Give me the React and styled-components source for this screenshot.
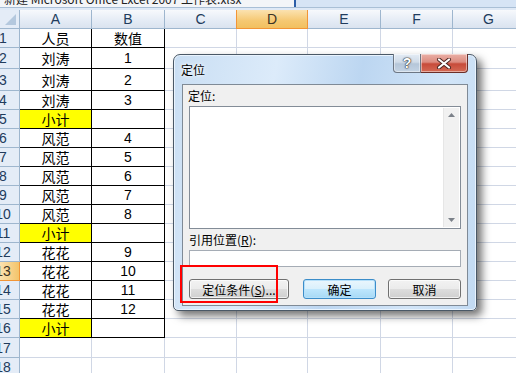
import React from "react";
import styled, { createGlobalStyle } from "styled-components";

const GlobalStyle = createGlobalStyle`
  html, body {
    margin: 0;
    padding: 0;
    background: #ffffff;
    overflow: hidden;
  }
`;

const COLS = [
  { name: "A", width: 72 },
  { name: "B", width: 73 },
  { name: "C", width: 72 },
  { name: "D", width: 71, active: true },
  { name: "E", width: 73 },
  { name: "F", width: 72 },
  { name: "G", width: 72 },
];

const ROWS = [
  { h: 19, a: "人员", b: "数值" },
  { h: 21, a: "刘涛", b: "1" },
  { h: 22, a: "刘涛", b: "2" },
  { h: 19, a: "刘涛", b: "3" },
  { h: 19, a: "小计", b: "", sub: true },
  { h: 19, a: "风范", b: "4" },
  { h: 19, a: "风范", b: "5" },
  { h: 19, a: "风范", b: "6" },
  { h: 19, a: "风范", b: "7" },
  { h: 19, a: "风范", b: "8" },
  { h: 19, a: "小计", b: "", sub: true },
  { h: 19, a: "花花", b: "9" },
  { h: 19, a: "花花", b: "10" },
  { h: 19, a: "花花", b: "11" },
  { h: 19, a: "花花", b: "12" },
  { h: 19, a: "小计", b: "", sub: true },
  { h: 20 },
  { h: 19 },
];

const Page = styled.div`
  position: relative;
  width: 516px;
  height: 373px;
  overflow: hidden;
  background: #ffffff;
`;

const TopStrip = styled.div`
  display: flex;
  height: 7px;
  overflow: hidden;
  background: #d6e4f5;
`;

const FileName = styled.div`
  width: 290px;
  border-right: 2px solid #2c5ea8;
  background: #f3f5f8;
  font-family: "Noto Sans CJK SC", "Liberation Sans", sans-serif;
  font-size: 12px;
  line-height: 12px;
  margin-top: -7px;
  padding-left: 4px;
  color: #222;
  white-space: nowrap;
  overflow: hidden;
`;

const Band = styled.div`
  height: 3px;
  background: #dfe9f6;
  border-top: 1px solid #a9bfd6;
  box-sizing: border-box;
`;

const Sheet = styled.div`
  display: grid;
  grid-template-columns: 20px ${COLS.map((c) => c.width + "px").join(" ")};
  width: 560px;
`;

const Corner = styled.div`
  position: relative;
  height: 19px;
  background: #e4ecf7;
  border-right: 1px solid #9eb6ce;
  border-bottom: 1px solid #9eb6ce;
  box-sizing: border-box;
  &::after {
    content: "";
    position: absolute;
    right: 3px;
    bottom: 3px;
    border-left: 11px solid transparent;
    border-bottom: 11px solid #b4c8de;
  }
`;

const ColHead = styled.div`
  height: 19px;
  box-sizing: border-box;
  display: flex;
  align-items: center;
  justify-content: center;
  font-family: "Liberation Sans", Arial, sans-serif;
  font-size: 14px;
  color: ${({ $active }) => ($active ? "#3b3325" : "#213b5c")};
  background: ${({ $active }) =>
    $active
      ? "linear-gradient(#fbe2b0, #f5c872 60%, #f2c060)"
      : "linear-gradient(#f7f9fc, #e4ebf5 60%, #dae3ef)"};
  border-right: 1px solid ${({ $active }) => ($active ? "#f29536" : "#9eb6ce")};
  border-bottom: 1px solid ${({ $active }) => ($active ? "#f29536" : "#9eb6ce")};
  border-left: ${({ $active }) => ($active ? "1px solid #f29536" : "0")};
  margin-left: ${({ $active }) => ($active ? "-1px" : "0")};
`;

const RowHead = styled.div`
  height: ${({ $h }) => $h}px;
  box-sizing: border-box;
  overflow: hidden;
  display: flex;
  align-items: center;
  font-family: "Liberation Sans", Arial, sans-serif;
  font-size: 14px;
  color: ${({ $active }) => ($active ? "#3b3325" : "#213b5c")};
  background: ${({ $active }) =>
    $active ? "linear-gradient(90deg, #fbe2b0, #f3c46a)" : "#e4ecf7"};
  border-right: 1px solid ${({ $active }) => ($active ? "#f29536" : "#9eb6ce")};
  border-bottom: 1px solid ${({ $active }) => ($active ? "#f29536" : "#9eb6ce")};
  span {
    flex: none;
    width: 26px;
    margin-left: -10px;
    text-align: center;
  }
`;

const Cell = styled.div`
  height: ${({ $h }) => $h}px;
  box-sizing: border-box;
  display: flex;
  align-items: center;
  justify-content: center;
  white-space: nowrap;
  font-family: ${({ $num }) =>
    $num
      ? '"Liberation Sans", Arial, sans-serif'
      : '"Noto Sans CJK SC", "Liberation Sans", sans-serif'};
  font-size: 14px;
  line-height: 14px;
  color: #000;
  background: ${({ $yellow }) => ($yellow ? "#ffff00" : "#ffffff")};
  border-right: 1px solid ${({ $table }) => ($table ? "#000" : "#d0d7e5")};
  border-bottom: 1px solid ${({ $table }) => ($table ? "#000" : "#d0d7e5")};
`;

/* dialog */

const Dialog = styled.div`
  position: absolute;
  left: 173px;
  top: 54px;
  width: 304px;
  height: 257px;
  box-sizing: border-box;
  padding: 29px 8px 4px 8px;
  border: 1px solid #4a5866;
  border-radius: 7px 7px 5px 5px;
  background: linear-gradient(
    100deg,
    #c9def3 0%,
    #dcebfa 30%,
    #bcd6f1 55%,
    #d2e5f8 80%,
    #c2daf2 100%
  );
  box-shadow: 5px 5px 9px rgba(0, 0, 0, 0.55), inset 0 0 0 1px #e9f3fd;
  display: flex;
  font-family: "Noto Sans CJK SC", "Liberation Sans", sans-serif;
  font-size: 12px;
`;

const Title = styled.div`
  position: absolute;
  left: 7px;
  top: 6px;
  font-size: 12px;
  color: #000;
  text-shadow: 0 0 6px #ffffff, 0 0 3px #ffffff;
`;

const CaptionButtons = styled.div`
  position: absolute;
  right: 8px;
  top: -1px;
  display: flex;
`;

const CapButton = styled.div`
  height: 19px;
  width: ${({ $w }) => $w}px;
  box-sizing: border-box;
  display: flex;
  align-items: center;
  justify-content: center;
  border: 1px solid ${({ $close }) => ($close ? "#6b2e28" : "#6d7784")};
  border-top: 0;
  border-left-width: ${({ $close }) => ($close ? "0" : "1px")};
  border-radius: ${({ $close }) => ($close ? "0 0 4px 0" : "0 0 0 4px")};
  background: ${({ $close }) =>
    $close
      ? "linear-gradient(#eab0a6, #dc8c80 45%, #c74b3a 55%, #d46a55)"
      : "linear-gradient(#e4ecf5, #cfdbe8 45%, #b5c6d9 55%, #c4d4e4)"};
  box-shadow: inset 0 0 0 1px rgba(255, 255, 255, 0.45);
  color: #ffffff;
  font-family: "Liberation Sans", Arial, sans-serif;
  font-weight: bold;
  font-size: 14px;
  text-shadow: 0 0 1px #333, 0 0 1px #333, 0 0 2px #333;
`;

const Client = styled.div`
  flex: 1;
  background: #f0f0f0;
  border: 1px solid #7f8a96;
  padding: 3px 6px 0 5px;
  display: flex;
  flex-direction: column;
`;

const Label = styled.div`
  height: 18px;
  line-height: 16px;
  margin-top: ${({ $gap }) => $gap || 0}px;
  padding-left: ${({ $indent }) => $indent || 0}px;
  color: #000;
  u {
    text-decoration: underline;
  }
`;

const ListBox = styled.div`
  margin-left: 1px;
  height: 123px;
  box-sizing: border-box;
  background: #ffffff;
  border: 1px solid #838c97;
  display: flex;
  justify-content: flex-end;
`;

const ScrollBar = styled.div`
  width: 15px;
  margin: 1px;
  background: #f1f1f1;
  border-left: 1px solid #e6e6e6;
  display: flex;
  flex-direction: column;
  justify-content: space-between;
  align-items: center;
  padding: 5px 0;
`;

const Arrow = ({ down }) => (
  <svg width="7" height="4" viewBox="0 0 7 4">
    <path d={down ? "M0 0h7L3.5 4z" : "M3.5 0L7 4H0z"} fill="#7b8189" />
  </svg>
);

const Input = styled.div`
  margin-left: 1px;
  height: 17px;
  box-sizing: border-box;
  background: #ffffff;
  border: 1px solid #a5acb5;
  margin-bottom: 12px;
`;

const ButtonRow = styled.div`
  display: flex;
  justify-content: space-between;
  margin-left: 1px;
`;

const Group = styled.div`
  display: flex;
  gap: 12px;
`;

const Button = styled.div`
  width: ${({ $w }) => $w}px;
  height: 20px;
  box-sizing: border-box;
  display: flex;
  align-items: center;
  justify-content: center;
  border: 1px solid ${({ $default }) => ($default ? "#3c8dc9" : "#707070")};
  border-radius: 3px;
  background: ${({ $default }) =>
    $default
      ? "linear-gradient(#eaf6fd, #d9f0fc 50%, #bee6fd 51%, #a7d9f5)"
      : "linear-gradient(#f2f2f2, #ebebeb 50%, #dddddd 51%, #cfcfcf)"};
  box-shadow: inset 0 0 0 1px
    ${({ $default }) => ($default ? "#b6e0fa" : "rgba(255,255,255,0.7)")};
  color: #000;
  font-size: 12px;
  padding-top: 1px;
`;

const RedBox = styled.div`
  position: absolute;
  left: 180px;
  top: 265px;
  width: 98px;
  height: 38px;
  box-sizing: border-box;
  border: 2px solid #ff0000;
`;

const Grid = () => (
  <Sheet>
    <Corner />
    {COLS.map((c) => (
      <ColHead key={c.name} $active={c.active}>
        {c.name}
      </ColHead>
    ))}
    {ROWS.map((r, i) => {
      const inTable = i < 16;
      return (
        <React.Fragment key={i}>
          <RowHead $h={r.h} $active={i === 12}>
            <span>{i + 1}</span>
          </RowHead>
          <Cell $h={r.h} $table={inTable} $yellow={r.sub}>
            {r.a}
          </Cell>
          <Cell $h={r.h} $table={inTable} $num={i > 0}>
            {r.b}
          </Cell>
          {COLS.slice(2).map((c) => (
            <Cell key={c.name} $h={r.h} />
          ))}
        </React.Fragment>
      );
    })}
  </Sheet>
);

export default function App() {
  return (
    <Page>
      <GlobalStyle />
      <TopStrip>
        <FileName>新建 Microsoft Office Excel 2007 工作表.xlsx</FileName>
      </TopStrip>
      <Band />
      <Grid />

      <Dialog>
        <Title>定位</Title>
        <CaptionButtons>
          <CapButton $w={28}>?</CapButton>
          <CapButton $w={47} $close>
            <svg width="16" height="11" viewBox="0 0 16 11">
              <path
                d="M3 1.5L13 9.5M13 1.5L3 9.5"
                stroke="#4a2420"
                strokeWidth="4"
                strokeLinecap="round"
              />
              <path
                d="M3 1.5L13 9.5M13 1.5L3 9.5"
                stroke="#ffffff"
                strokeWidth="2.2"
                strokeLinecap="round"
              />
            </svg>
          </CapButton>
        </CaptionButtons>
        <Client>
          <Label>定位:</Label>
          <ListBox>
            <ScrollBar>
              <Arrow />
              <Arrow down />
            </ScrollBar>
          </ListBox>
          <Label $indent={1} $gap={3}>
            引用位置(<u>R</u>):
          </Label>
          <Input />
          <ButtonRow>
            <Button $w={100}>
              定位条件(<u>S</u>)...
            </Button>
            <Group>
              <Button $w={73} $default>
                确定
              </Button>
              <Button $w={73}>取消</Button>
            </Group>
          </ButtonRow>
        </Client>
      </Dialog>

      <RedBox />
    </Page>
  );
}
